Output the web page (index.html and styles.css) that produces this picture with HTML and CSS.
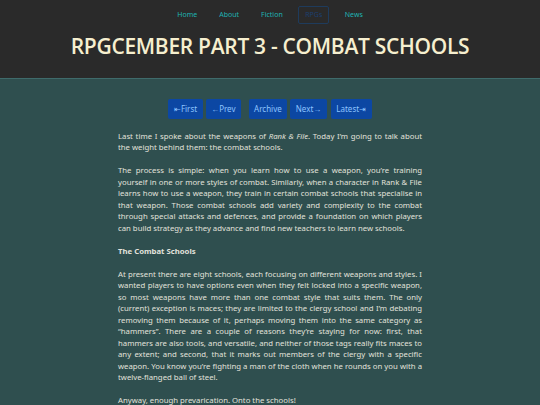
FILE: index.html
```html
<!DOCTYPE html>
<html lang="en">
<head>
<meta charset="utf-8">
<title>RPGcember Part 3 - Combat Schools</title>
<link rel="stylesheet" href="styles.css">
</head>
<body>
<header class="site-header">
  <nav class="site-nav">
    <a href="#" class="nav-link">Home</a>
    <a href="#" class="nav-link">About</a>
    <a href="#" class="nav-link">Fiction</a>
    <a href="#" class="nav-link nav-link--current">RPGs</a>
    <a href="#" class="nav-link">News</a>
  </nav>
  <h1 class="page-title">RPGcember Part 3 - Combat Schools</h1>
</header>
<main class="page-body">
  <div class="pager">
    <a href="#" class="pager-btn">⇤First</a>
    <a href="#" class="pager-btn pager-btn--tight">←Prev</a>
    <a href="#" class="pager-btn pager-btn--archive">Archive</a>
    <a href="#" class="pager-btn pager-btn--tight">Next→</a>
    <a href="#" class="pager-btn">Latest⇥</a>
  </div>
  <article class="post">
    <p>Last time I spoke about the weapons of <em>Rank &amp; File</em>. Today I’m going to talk about the weight behind them: the combat schools.</p>
    <p>The process is simple: when you learn how to use a weapon, you’re training yourself in one or more styles of combat. Similarly, when a character in Rank &amp; File learns how to use a weapon, they train in certain combat schools that specialise in that weapon. Those combat schools add variety and complexity to the combat through special attacks and defences, and provide a foundation on which players can build strategy as they advance and find new teachers to learn new schools.</p>
    <p class="post-heading">The Combat Schools</p>
    <p>At present there are eight schools, each focusing on different weapons and styles. I wanted players to have options even when they felt locked into a specific weapon, so most weapons have more than one combat style that suits them. The only (current) exception is maces; they are limited to the clergy school and I’m debating removing them because of it, perhaps moving them into the same category as “hammers”. There are a couple of reasons they’re staying for now: first, that hammers are also tools, and versatile, and neither of those tags really fits maces to any extent; and second, that it marks out members of the clergy with a specific weapon. You know you’re fighting a man of the cloth when he rounds on you with a twelve-flanged ball of steel.</p>
    <p>Anyway, enough prevarication. Onto the schools!</p>
  </article>
</main>
</body>
</html>
```

FILE: styles.css
```css
* {
  box-sizing: border-box;
}

html,
body {
  margin: 0;
  padding: 0;
}

body {
  background: #2f4f4f;
  font-family: "Noto Sans", "Open Sans", sans-serif;
  color: #e2e2dc;
  min-height: 405px;
}

.site-header {
  background: #2a2a2a;
  border-bottom: 1px solid #3f6b6b;
  height: 79px;
  display: flex;
  flex-direction: column;
  align-items: center;
}

.site-nav {
  display: flex;
  justify-content: center;
  align-items: center;
  gap: 9px;
  padding-top: 6px;
}

.nav-link {
  font-size: 7px;
  line-height: 14px;
  color: #1fb3b3;
  text-decoration: none;
  padding: 1px 5.5px;
  border: 1px solid transparent;
  border-radius: 2px;
}

.nav-link--current {
  color: #1c3f70;
  border-color: #1e3b5c;
  padding: 1px 6px;
}

.page-title {
  margin: 9px 0 0;
  font-family: "Open Sans", "Noto Sans", sans-serif;
  font-weight: 600;
  font-size: 21px;
  line-height: 26px;
  letter-spacing: -0.3px;
  text-transform: uppercase;
  color: #f6efcf;
}

.page-body {
  display: flex;
  flex-direction: column;
  align-items: center;
  padding-top: 20px;
}

.pager {
  display: flex;
  align-items: center;
}

.pager-btn {
  display: block;
  background: #0c47a3;
  color: #8cc4ff;
  text-decoration: none;
  font-size: 8px;
  line-height: 19.5px;
  padding: 0 5.5px;
  border-radius: 2px;
}

.pager-btn--tight {
  margin-left: 3px;
}

.pager-btn--archive {
  margin-left: 7.5px;
}

.pager-btn:last-child {
  margin-left: 4px;
}

.post {
  width: 304px;
  margin-top: 12px;
  font-size: 7.75px;
  line-height: 11.5px;
  text-align: justify;
}

.post p {
  margin: 0 0 11.5px;
}

.post-heading {
  font-weight: 700;
  text-align: left;
}
```
